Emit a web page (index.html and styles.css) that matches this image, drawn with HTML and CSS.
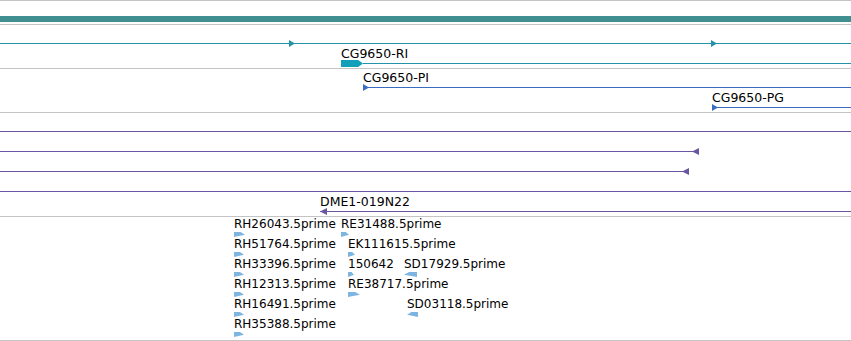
FILE: index.html
```html
<!DOCTYPE html>
<html lang="en">
<head>
  <meta charset="UTF-8" />
  <title>Genome tracks</title>
  <link rel="stylesheet" href="styles.css">
</head>
<body>
  <div class="view">

    <!-- reference sequence overview -->
    <div class="track">
      <div class="lane"><div class="bar"></div></div>
    </div>

    <!-- transcripts -->
    <div class="track teal">
      <div class="lane">
        <div class="line" style="left:0;width:851px"></div>
        <div class="arrow" style="left:289px"></div>
        <div class="arrow" style="left:711px"></div>
      </div>
      <div class="lane">
        <span class="label" style="left:341px">CG9650-RI</span>
        <div class="cds" style="left:341px;width:22px"></div>
        <div class="line" style="left:363px;width:488px"></div>
      </div>
    </div>

    <div class="track blue">
      <div class="lane">
        <span class="label" style="left:363px">CG9650-PI</span>
        <div class="line" style="left:363px;width:488px"></div>
        <div class="arrow" style="left:363px"></div>
      </div>
      <div class="lane">
        <span class="label" style="left:712px">CG9650-PG</span>
        <div class="line" style="left:712px;width:139px"></div>
        <div class="arrow" style="left:712px"></div>
      </div>
    </div>

    <!-- clones -->
    <div class="track purple">
      <div class="lane"><div class="line" style="left:0;width:851px"></div></div>
      <div class="lane">
        <div class="line" style="left:0;width:693px"></div>
        <div class="arrow left" style="left:692px"></div>
      </div>
      <div class="lane">
        <div class="line" style="left:0;width:683px"></div>
        <div class="arrow left" style="left:682px"></div>
      </div>
      <div class="lane"><div class="line" style="left:0;width:851px"></div></div>
      <div class="lane">
        <span class="label" style="left:320px">DME1-019N22</span>
        <div class="line" style="left:320px;width:531px"></div>
        <div class="arrow left" style="left:320px"></div>
      </div>
    </div>

    <!-- ESTs -->
    <div class="track est">
      <div class="lane">
        <span class="label" style="left:234px">RH26043.5prime</span>
        <div class="read" style="left:234px;width:11px"></div>
        <span class="label" style="left:341px">RE31488.5prime</span>
        <div class="read" style="left:341px;width:8px"></div>
      </div>
      <div class="lane">
        <span class="label" style="left:234px">RH51764.5prime</span>
        <div class="read" style="left:234px;width:10px"></div>
        <span class="label" style="left:348px">EK111615.5prime</span>
        <div class="read" style="left:348px;width:7px"></div>
      </div>
      <div class="lane">
        <span class="label" style="left:234px">RH33396.5prime</span>
        <div class="read" style="left:234px;width:10px"></div>
        <span class="label" style="left:348px">150642</span>
        <div class="read" style="left:348px;width:6px"></div>
        <span class="label" style="left:404px">SD17929.5prime</span>
        <div class="read rev" style="left:404px;width:13px"></div>
      </div>
      <div class="lane">
        <span class="label" style="left:234px">RH12313.5prime</span>
        <div class="read" style="left:234px;width:10px"></div>
        <span class="label" style="left:348px">RE38717.5prime</span>
        <div class="read" style="left:348px;width:12px"></div>
      </div>
      <div class="lane">
        <span class="label" style="left:234px">RH16491.5prime</span>
        <div class="read" style="left:234px;width:10px"></div>
        <span class="label" style="left:407px">SD03118.5prime</span>
        <div class="read rev" style="left:407px;width:11px"></div>
      </div>
      <div class="lane">
        <span class="label" style="left:234px">RH35388.5prime</span>
        <div class="read" style="left:234px;width:10px"></div>
      </div>
    </div>

  </div>
</body>
</html>
```

FILE: styles.css
```css
body { margin: 0; background: #fff; color: #000; font-family: "DejaVu Sans", sans-serif; }
.view { width: 851px; overflow: hidden; border-bottom: 1px solid #c4c4c4; }
.track { border-top: 1px solid #c4c4c4; padding-bottom: 3px; }
.lane { position: relative; height: 20px; }

.teal { color: #2393a8; }
.blue { color: #3a6cc2; }
.purple { color: #6b56a3; }
.est { color: #7db5e0; }

.bar { position: absolute; left: 0; right: 0; top: 15px; height: 6px; background: #418f91; }
.line { position: absolute; top: 18px; height: 1px; background: currentColor; }
.arrow { position: absolute; top: 15px; width: 6px; height: 7px; background: currentColor; clip-path: polygon(0 0, 100% 50%, 0 100%); }
.arrow.left { width: 7px; clip-path: polygon(100% 0, 0 50%, 100% 100%); }
.cds { position: absolute; top: 15px; height: 7px; background: #10a0ba; clip-path: polygon(0 0, 78% 0, 100% 50%, 78% 100%, 0 100%); }
.read { position: absolute; top: 15px; height: 5px; background: currentColor; clip-path: polygon(0 0, 60% 0, 100% 55%, 0 100%); }
.read.rev { clip-path: polygon(40% 0, 100% 0, 100% 100%, 0 55%); }

.label { position: absolute; top: 1px; font-size: 12.5px; color: #000; white-space: nowrap; }
.est .label { top: 0; font-size: 12px; }
```
